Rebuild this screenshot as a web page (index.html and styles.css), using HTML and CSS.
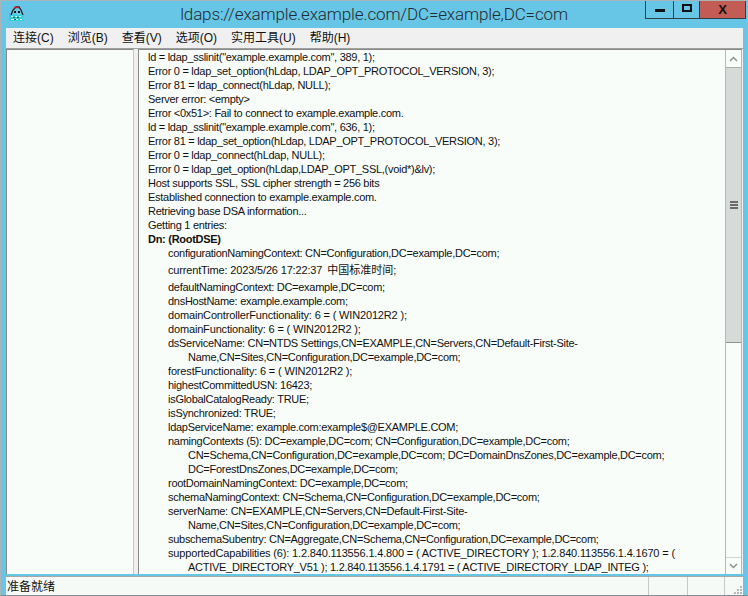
FILE: index.html
```html
<!DOCTYPE html>
<html lang="zh">
<head>
<meta charset="utf-8">
<title>ldaps://example.example.com/DC=example,DC=com</title>
<link rel="stylesheet" href="styles.css">
</head>
<body>
<div class="window">
  <header class="titlebar">
    <svg class="app-icon" width="16" height="16" viewBox="0 0 16 16">
      <path d="M3 10 L5 5 L8 2 L11 2 L13 5 L15 10" fill="none" stroke="#222" stroke-width="1.3"/>
      <path d="M6 2.5h5" stroke="#c02030" stroke-width="1.4"/>
      <path d="M6 6h2v2H6zM10 6h2v2h-2z" fill="#1a1a1a"/>
      <path d="M1 8h1v8H1z" fill="#10e0e0"/>
      <path d="M2 10h13v6H2z" fill="#2fd0dc"/>
      <path d="M3 11h2v1H3zM7 11h2v1H7zM11 11h2v1h-2zM3 14h3v1H3zM8 14h2v1H8zM12 14h2v1h-2z" fill="#e6fbfb"/>
      <path d="M5 12h2v1H5zM9 12h2v1H9zM6 14h2v1H6z" fill="#0a6a70"/>
    </svg>
    <div class="title">ldaps://example.example.com/DC=example,DC=com</div>
    <div class="controls">
      <div class="ctl ctl-min"><span class="min-glyph"></span></div>
      <div class="ctl ctl-max"><span class="max-glyph"></span></div>
      <div class="ctl ctl-close">X</div>
    </div>
  </header>
  <nav class="menubar">
    <span>连接(C)</span><span>浏览(B)</span><span>查看(V)</span><span>选项(O)</span><span>实用工具(U)</span><span>帮助(H)</span>
  </nav>
  <main class="panes">
    <div class="tree"></div>
    <div class="log-pane">
      <div class="log">
        <div>ld = ldap_sslinit("example.example.com", 389, 1);</div>
        <div>Error 0 = ldap_set_option(hLdap, LDAP_OPT_PROTOCOL_VERSION, 3);</div>
        <div>Error 81 = ldap_connect(hLdap, NULL);</div>
        <div>Server error: &lt;empty&gt;</div>
        <div>Error &lt;0x51&gt;: Fail to connect to example.example.com.</div>
        <div>ld = ldap_sslinit("example.example.com", 636, 1);</div>
        <div>Error 81 = ldap_set_option(hLdap, LDAP_OPT_PROTOCOL_VERSION, 3);</div>
        <div>Error 0 = ldap_connect(hLdap, NULL);</div>
        <div>Error 0 = ldap_get_option(hLdap,LDAP_OPT_SSL,(void*)&amp;lv);</div>
        <div>Host supports SSL, SSL cipher strength = 256 bits</div>
        <div>Established connection to example.example.com.</div>
        <div>Retrieving base DSA information...</div>
        <div>Getting 1 entries:</div>
        <div class="dn">Dn: (RootDSE)</div>
        <div class="attr">configurationNamingContext: CN=Configuration,DC=example,DC=com;</div>
        <div class="attr tall wide">currentTime: 2023/5/26 17:22:37 <span class="cjk">中国标准时间;</span></div>
        <div class="attr">defaultNamingContext: DC=example,DC=com;</div>
        <div class="attr">dnsHostName: example.example.com;</div>
        <div class="attr wide">domainControllerFunctionality: 6 = ( WIN2012R2 );</div>
        <div class="attr wide">domainFunctionality: 6 = ( WIN2012R2 );</div>
        <div class="attr">dsServiceName: CN=NTDS Settings,CN=EXAMPLE,CN=Servers,CN=Default-First-Site-</div>
        <div class="cont">Name,CN=Sites,CN=Configuration,DC=example,DC=com;</div>
        <div class="attr wide">forestFunctionality: 6 = ( WIN2012R2 );</div>
        <div class="attr">highestCommittedUSN: 16423;</div>
        <div class="attr">isGlobalCatalogReady: TRUE;</div>
        <div class="attr">isSynchronized: TRUE;</div>
        <div class="attr">ldapServiceName: example.com:example$@EXAMPLE.COM;</div>
        <div class="attr">namingContexts (5): DC=example,DC=com; CN=Configuration,DC=example,DC=com;</div>
        <div class="cont">CN=Schema,CN=Configuration,DC=example,DC=com; DC=DomainDnsZones,DC=example,DC=com;</div>
        <div class="cont">DC=ForestDnsZones,DC=example,DC=com;</div>
        <div class="attr">rootDomainNamingContext: DC=example,DC=com;</div>
        <div class="attr">schemaNamingContext: CN=Schema,CN=Configuration,DC=example,DC=com;</div>
        <div class="attr">serverName: CN=EXAMPLE,CN=Servers,CN=Default-First-Site-</div>
        <div class="cont">Name,CN=Sites,CN=Configuration,DC=example,DC=com;</div>
        <div class="attr">subschemaSubentry: CN=Aggregate,CN=Schema,CN=Configuration,DC=example,DC=com;</div>
        <div class="attr wide">supportedCapabilities (6): 1.2.840.113556.1.4.800 = ( ACTIVE_DIRECTORY ); 1.2.840.113556.1.4.1670 = (</div>
        <div class="cont">ACTIVE_DIRECTORY_V51 ); 1.2.840.113556.1.4.1791 = ( ACTIVE_DIRECTORY_LDAP_INTEG );</div>
      </div>
      <div class="scrollbar">
        <div class="sb-btn"><svg width="9" height="6" viewBox="0 0 9 6"><path d="M1 5 L4.5 1.5 L8 5" fill="none" stroke="#8a8f8e" stroke-width="1.4"/></svg></div>
        <div class="sb-thumb"><span class="grip"></span></div>
        <div class="sb-track"></div>
        <div class="sb-btn sb-btn-down"><svg width="9" height="6" viewBox="0 0 9 6"><path d="M1 1 L4.5 4.5 L8 1" fill="none" stroke="#8a8f8e" stroke-width="1.4"/></svg></div>
      </div>
    </div>
  </main>
  <footer class="status">
    <div class="st st-main">准备就绪</div>
    <div class="st st-a"></div>
    <div class="st st-b"></div>
    <div class="st st-c">
      <svg class="resize" width="9" height="9" viewBox="0 0 9 9"><path d="M7 1h2v2H7zM4 4h2v2H4zM7 4h2v2H7zM1 7h2v2H1zM4 7h2v2H4zM7 7h2v2H7z" fill="#b4b8b6"/></svg>
    </div>
  </footer>
</div>
</body>
</html>
```
FILE: styles.css
```css
* { box-sizing: border-box; }
html, body { margin: 0; padding: 0; }
body { width: 748px; height: 596px; overflow: hidden; font-family: "Liberation Sans", "Noto Sans CJK SC", sans-serif; }
.window { width: 748px; height: 596px; background: #67c5e6; border: 1px solid #a8b4b8; border-bottom-color: #7f8c90; padding: 0 4px 0 5px; display: flex; flex-direction: column; }
.titlebar { height: 27px; flex: none; display: grid; grid-template-columns: 1fr auto 1fr; align-items: start; margin: 0 -4px 0 -5px; padding: 0 1px; }
.app-icon { margin: 4px 0 0 6px; }
.title { font-family: "Roboto", sans-serif; font-weight: 300; font-size: 17px; letter-spacing: -0.13px; line-height: 26px; color: #222c30; white-space: nowrap; }
.controls { justify-self: end; display: flex; height: 18px; border: 1px solid #2c3e46; border-top: 0; }
.ctl { height: 17px; display: flex; align-items: center; justify-content: center; }
.ctl-min { width: 28px; border-right: 1px solid #2c3e46; }
.ctl-max { width: 26px; border-right: 1px solid #2c3e46; }
.ctl-close { width: 45px; background: #c35c54; font-weight: bold; font-size: 13px; color: #111; }
.min-glyph { width: 10px; height: 3px; background: #111; margin-top: 2px; }
.max-glyph { width: 10px; height: 8px; border: 2px solid #111; margin-top: -3px; }
.menubar { height: 21px; flex: none; background: #f0f0f0; display: flex; gap: 14px; padding: 1px 7px 0; font-size: 12px; line-height: 19px; color: #111; border-bottom: 1px solid #a0a0a0; }
.panes { flex: 1; min-height: 0; display: flex; gap: 4px; background: #f0f0f0; padding-right: 1px; }
.tree { width: 128px; flex: none; background: #f9fdfa; border-left: 1px solid #8a8a8a; border-top: 1px solid #8a8a8a; border-right: 1px solid #c8c8c8; }
.log-pane { flex: 1; min-width: 0; display: flex; background: #f9fdfa; border-left: 1px solid #8a8a8a; border-top: 1px solid #8a8a8a; }
.log { flex: 1; min-width: 0; overflow: hidden; padding: 0 0 0 9px; font-size: 11px; letter-spacing: -0.28px; line-height: 14px; color: #111; white-space: nowrap; }
.dn { font-weight: bold; }
.attr { padding-left: 20px; }
.cont { padding-left: 40px; }
.tall { line-height: 20px; }
.wide { letter-spacing: -0.16px; }
.cjk { font-size: 11px; letter-spacing: 0; margin-left: 2px; }
.scrollbar { width: 17px; flex: none; display: flex; flex-direction: column; background: #f9fdfa; border-left: 1px solid #b4b8b6; border-right: 1px solid #b4b8b6; }
.sb-btn { height: 17px; flex: none; display: flex; align-items: center; justify-content: center; }
.sb-btn-down { border-top: 1px solid #d0d4d2; }
.sb-thumb { height: 276px; flex: none; background: #d6dad8; border-top: 1px solid #a8acaa; border-bottom: 1px solid #8e9290; display: flex; align-items: center; justify-content: center; }
.grip { width: 8px; height: 8px; background: repeating-linear-gradient(#6c6c6c 0 2px, transparent 2px 3px); }
.sb-track { flex: 1; }
.status { height: 19px; flex: none; background: #f6faf7; border-top: 1px solid #a8a8a8; display: flex; font-size: 12px; line-height: 18px; color: #111; margin-top: 2px; }
.st { border-right: 1px solid #c8c8c8; padding: 1px 0 0 1px; }
.st-main { width: 643px; }
.st-a { width: 39px; }
.st-b { width: 37px; }
.st-c { flex: 1; border-right: 0; display: flex; align-items: flex-end; justify-content: flex-end; }
.resize { margin: 0 1px 1px 0; }
```
